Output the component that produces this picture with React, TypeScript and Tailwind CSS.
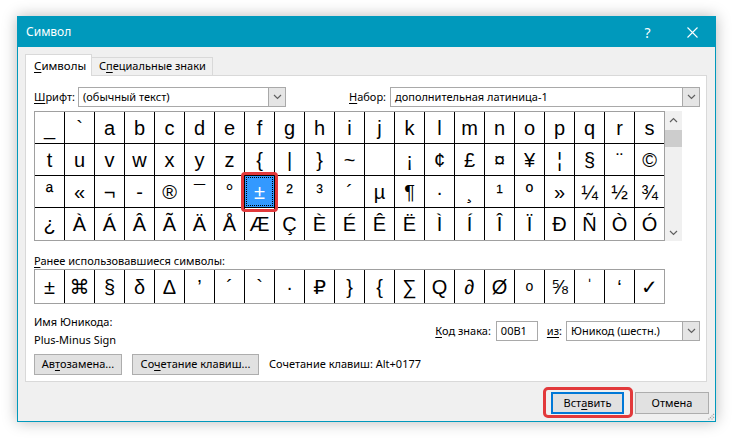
import React from 'react'

const UI = "font-['Segoe_UI','Noto_Sans','DejaVu_Sans',sans-serif] text-[11px] text-black"
const GLYPH = "font-['Liberation_Sans','DejaVu_Sans',sans-serif] text-[20px]"

const GRID: string[][] = [
  ['_', '`', 'a', 'b', 'c', 'd', 'e', 'f', 'g', 'h', 'i', 'j', 'k', 'l', 'm', 'n', 'o', 'p', 'q', 'r', 's'],
  ['t', 'u', 'v', 'w', 'x', 'y', 'z', '{', '|', '}', '~', '\u00a0', '¡', '¢', '£', '¤', '¥', '¦', '§', '¨', '©'],
  ['ª', '«', '¬', '-', '®', '¯', '°', '±', '²', '³', '´', 'µ', '¶', '·', '¸', '¹', 'º', '»', '¼', '½', '¾'],
  ['¿', 'À', 'Á', 'Â', 'Ã', 'Ä', 'Å', 'Æ', 'Ç', 'È', 'É', 'Ê', 'Ë', 'Ì', 'Í', 'Î', 'Ï', 'Ð', 'Ñ', 'Ò', 'Ó'],
]

const RECENT = ['±', '⌘', '§', 'δ', 'Δ', '’', '´', '`', '·', '₽', '}', '{', '∑', 'Ԛ', '∂', 'Ø', 'ο', '⅝', 'ˈ', '‘', '✓']

const Chevron: React.FC<{ up?: boolean }> = ({ up }) => (
  <svg width="9" height="6" viewBox="0 0 9 6">
    <path d={up ? 'M1 5 L4.5 1.5 L8 5' : 'M1 1 L4.5 4.5 L8 1'} fill="none" stroke="#606060" strokeWidth="1.2" />
  </svg>
)

const Dropdown: React.FC<{ value: string; width: string }> = ({ value, width }) => (
  <div className={`flex h-[20px] border border-[#a9a9a9] bg-white ${width}`}>
    <span className="flex-1 truncate pl-[4px] leading-[18px]">{value}</span>
    <span className="flex w-[17px] items-center justify-center border-l border-[#a9a9a9] bg-[#e5e5e5]">
      <Chevron />
    </span>
  </div>
)

const Btn: React.FC<{ children: React.ReactNode; width: string }> = ({ children, width }) => (
  <div className={`flex h-[21px] items-center justify-center border border-[#adadad] bg-[#e1e1e1] ${width}`}>
    {children}
  </div>
)

const App: React.FC = () => {
  return (
    <div className={`h-[445px] w-[737px] bg-white pl-[17px] pt-[16px] ${UI}`}>
      <div className="relative flex w-[699px] flex-col border border-[#0099bc] bg-[#f0f0f0] shadow-[0_0_14px_rgba(0,0,0,0.28)]">
        {/* Title bar */}
        <div className="flex h-[30px] items-center bg-[#0099bc] text-[12px] text-white">
          <span className="pl-[8px]">Символ</span>
          <span className="ml-auto flex h-full w-[45px] items-center justify-center text-[14px]">?</span>
          <span className="flex h-full w-[45px] items-center justify-center">
            <svg width="11" height="11" viewBox="0 0 11 11">
              <path d="M0.5 0.5 L10.5 10.5 M10.5 0.5 L0.5 10.5" stroke="#fff" strokeWidth="1.1" />
            </svg>
          </span>
        </div>

        <div className="pl-[7px] pr-[8px] pt-[7px]">
          {/* Tabs */}
          <div className="flex h-[21px] items-end whitespace-nowrap">
            <div className="relative z-10 -mb-px flex h-[22px] w-[67px] items-center border border-b-0 border-[#d9d9d9] bg-white pl-[8px] text-[11.5px]">
              <span><u className="underline-offset-2">С</u>имволы</span>
            </div>
            <div className="flex h-[18px] w-[121px] items-center border border-b-0 border-l-0 border-[#d9d9d9] pl-[7px]">
              <span>С<u className="underline-offset-2">п</u>ециальные знаки</span>
            </div>
          </div>

          {/* Panel */}
          <div className="flex flex-col border border-[#d9d9d9] bg-white pb-[6px] pl-[8px] pr-[6px] pt-[11px]">
            <div className="flex items-center">
              <span className="w-[44px]"><u className="underline-offset-2">Ш</u>рифт:</span>
              <Dropdown value="(обычный текст)" width="w-[208px]" />
              <span className="ml-auto w-[41px]"><u className="underline-offset-2">Н</u>абор:</span>
              <Dropdown value="дополнительная латиница-1" width="w-[310px]" />
            </div>

            {/* Symbol grid */}
            <div className="mt-[4px] flex">
              <div className={`grid grid-cols-[repeat(21,29px)] grid-rows-[31px_31px_31px_32px] gap-px border border-[#a0a0a0] bg-black ${GLYPH}`}>
                {GRID.flatMap((row, r) =>
                  row.map((ch, c) =>
                    r === 2 && c === 7 ? (
                      <div key={`${r}-${c}`} className="relative flex items-center justify-center bg-[#3399ff] text-white">
                        {ch}
                        <span className="absolute inset-[1px] border border-dotted border-black" />
                        <span className="absolute -bottom-[5px] -left-[4px] -right-[4px] -top-[4px] z-10 rounded-[4px] border-[3px] border-[#e2393b]" />
                      </div>
                    ) : (
                      <div key={`${r}-${c}`} className="flex items-center justify-center bg-white">{ch}</div>
                    )
                  )
                )}
              </div>
              <div className="flex w-[17px] flex-col items-center bg-[#f0f0f0]">
                <div className="flex h-[17px] items-center justify-center"><Chevron up /></div>
                <div className="mt-[2px] h-[17px] w-full bg-[#cdcdcd]" />
                <div className="mt-auto flex h-[17px] items-center justify-center"><Chevron /></div>
              </div>
            </div>

            {/* Recently used */}
            <div className="mt-[12px] leading-[16px]"><u className="underline-offset-2">Р</u>анее использовавшиеся символы:</div>
            <div className={`grid w-fit grid-cols-[repeat(21,29px)] grid-rows-[33px] gap-px border border-[#a0a0a0] bg-black ${GLYPH}`}>
              {RECENT.map((ch, i) => (
                <div key={i} className={`flex items-center justify-center bg-white ${ch === 'ο' ? 'text-[14px]' : ''}`}>{ch}</div>
              ))}
            </div>

            {/* Unicode info */}
            <div className="mt-[9px] flex items-center">
              <div className="flex flex-col leading-[18px]">
                <span>Имя Юникода:</span>
                <span>Plus-Minus Sign</span>
              </div>
              <div className="ml-auto flex items-center">
                <span><u className="underline-offset-2">К</u>од знака:</span>
                <div className="ml-[5px] h-[20px] w-[42px] border border-[#a9a9a9] bg-white pl-[4px] leading-[18px]">00B1</div>
                <span className="ml-[9px] mr-[4px]"><u className="underline-offset-2">из</u>:</span>
                <Dropdown value="Юникод (шестн.)" width="w-[134px]" />
              </div>
            </div>

            {/* Buttons */}
            <div className="mt-[5px] flex items-center">
              <Btn width="w-[88px]"><span>Ав<u className="underline-offset-2">т</u>озамена...</span></Btn>
              <div className="ml-[10px]" />
              <Btn width="w-[127px]"><span>Со<u className="underline-offset-2">ч</u>етание клавиш...</span></Btn>
              <span className="ml-[10px]">Сочетание клавиш: Alt+0177</span>
            </div>
          </div>

          {/* Dialog buttons */}
          <div className="-mr-[2px] flex justify-end pb-[7px] pt-[10px]">
            <div className="relative flex h-[22px] w-[73px] items-center justify-center border-2 border-[#0078d7] bg-[#e1e1e1]">
              <span>Вст<u className="underline-offset-2">а</u>вить</span>
              <span className="absolute -bottom-[6px] -left-[10px] -right-[11px] -top-[7px] rounded-[5px] border-[3px] border-[#e2393b]" />
            </div>
            <div className="ml-[11px] flex h-[22px] w-[74px] items-center justify-center border border-[#adadad] bg-[#e1e1e1]">
              Отмена
            </div>
          </div>
        </div>

        {/* Resize grip */}
        <svg className="absolute bottom-0 right-0" width="9" height="9" viewBox="0 0 9 9">
          <path d="M8 2 L2 8 M8 5 L5 8" stroke="#a0a0a0" strokeWidth="1.2" strokeDasharray="1.2 1" />
        </svg>
      </div>
    </div>
  )
}

export default App
